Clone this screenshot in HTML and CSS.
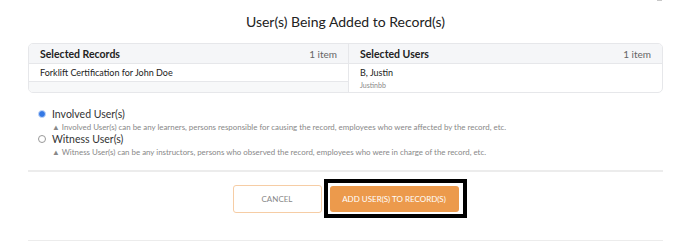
FILE: index.html
```html
<!DOCTYPE html>
<html lang="en">
<head>
    <meta charset="UTF-8">
    <meta name="viewport" content="width=device-width, initial-scale=1.0">
    <title>Add Users to Records</title>
    <link rel="stylesheet" href="styles.css">
</head>
<body>
    <div class="modal">
        <span class="close-mark"></span>
        <h1 class="modal-title">User(s) Being Added to Record(s)</h1>

        <!-- Selected records / users -->
        <div class="selection-card">
            <div class="selection-col">
                <div class="selection-head">
                    <span class="head-label">Selected Records</span>
                    <span class="head-count">1 item</span>
                </div>
                <div class="selection-row">Forklift Certification for John Doe</div>
                <div class="selection-row empty"></div>
            </div>
            <div class="selection-col">
                <div class="selection-head">
                    <span class="head-label">Selected Users</span>
                    <span class="head-count">1 item</span>
                </div>
                <div class="selection-row user-row">
                    <span class="user-name">B, Justin</span>
                    <span class="user-login">Justinbb</span>
                </div>
            </div>
        </div>

        <!-- Role choice -->
        <div class="role-options">
            <label class="role-option">
                <span class="radio checked"></span>
                <span class="role-name">Involved User(s)</span>
            </label>
            <p class="role-help">&#9650; Involved User(s) can be any learners, persons responsible for causing the record, employees who were affected by the record, etc.</p>
            <label class="role-option">
                <span class="radio"></span>
                <span class="role-name">Witness User(s)</span>
            </label>
            <p class="role-help">&#9650; Witness User(s) can be any instructors, persons who observed the record, employees who were in charge of the record, etc.</p>
        </div>

        <div class="modal-footer">
            <button class="button cancel-button">CANCEL</button>
            <div class="focus-ring">
                <button class="button add-button">ADD USER(S) TO RECORD(S)</button>
            </div>
        </div>
    </div>
</body>
</html>
```

FILE: styles.css
```css
* {
    box-sizing: border-box;
}
body {
    margin: 0;
    font-family: Lato, "Noto Sans", sans-serif;
    background-color: #fff;
    color: #222;
}
.modal {
    position: relative;
    padding: 0 25px 0 28px;
}
.close-mark {
    position: absolute;
    top: 0;
    right: 26px;
    width: 5px;
    height: 1px;
    background: #c8c8c8;
}
.modal-title {
    margin: 0;
    padding-top: 13px;
    height: 43px;
    font-size: 14px;
    font-weight: 400;
    text-align: center;
    color: #222;
}
.selection-card {
    display: grid;
    grid-template-columns: 319px 1fr;
    border: 1px solid #e6e7ea;
    border-radius: 5px;
    overflow: hidden;
}
.selection-col + .selection-col {
    border-left: 1px solid #e6e7ea;
}
.selection-head {
    display: flex;
    justify-content: space-between;
    align-items: center;
    height: 20px;
    padding: 0 11px;
    background-color: #f5f6f8;
    border-bottom: 1px solid #e6e7ea;
}
.head-label {
    font-size: 10.5px;
    font-weight: 700;
}
.head-count {
    font-size: 10px;
    color: #666;
}
.selection-row {
    height: 18px;
    padding: 0 11px;
    font-size: 9px;
    line-height: 17px;
    border-bottom: 1px solid #e6e7ea;
}
.selection-row.empty {
    height: 10px;
    background-color: #f7f8f9;
    border-bottom: none;
}
.user-row {
    display: flex;
    flex-direction: column;
    height: 28px;
    line-height: normal;
    padding-top: 3px;
    border-bottom: none;
}
.user-name {
    font-size: 9px;
}
.user-login {
    margin-top: 3px;
    font-size: 7px;
    color: #888;
}
.role-options {
    padding: 15px 0 12px 10px;
    border-bottom: 2px solid #ececec;
}
.role-option {
    display: flex;
    align-items: center;
    gap: 6px;
    height: 12px;
}
.radio {
    flex: none;
    width: 8px;
    height: 8px;
    border: 1px solid #999;
    border-radius: 50%;
    background: #fff;
}
.radio.checked {
    border: 1.5px solid #c4d8f8;
    background: #3478e5;
}
.role-name {
    font-size: 10.5px;
    color: #333;
}
.role-help {
    margin: 2px 0 1px 14px;
    height: 10px;
    font-size: 7.9px;
    line-height: 10px;
    color: #888;
}
.modal-footer {
    display: flex;
    justify-content: center;
    align-items: flex-start;
    gap: 2px;
    height: 70px;
    padding: 7px 0 0 8px;
    border-bottom: 2px solid #ececec;
}
.button {
    height: 28px;
    border-radius: 3px;
    font-family: Lato, "Noto Sans", sans-serif;
    font-size: 8px;
    cursor: pointer;
}
.cancel-button {
    width: 89px;
    margin-top: 6px;
    background: #fff;
    border: 1px solid #f6cda5;
    color: #888;
}
.focus-ring {
    padding: 3px 4px 2px 2px;
    border: 4px solid #000;
}
.add-button {
    display: block;
    width: 129px;
    height: 26px;
    background: #ec9a4c;
    border: none;
    color: #fff;
}
```
